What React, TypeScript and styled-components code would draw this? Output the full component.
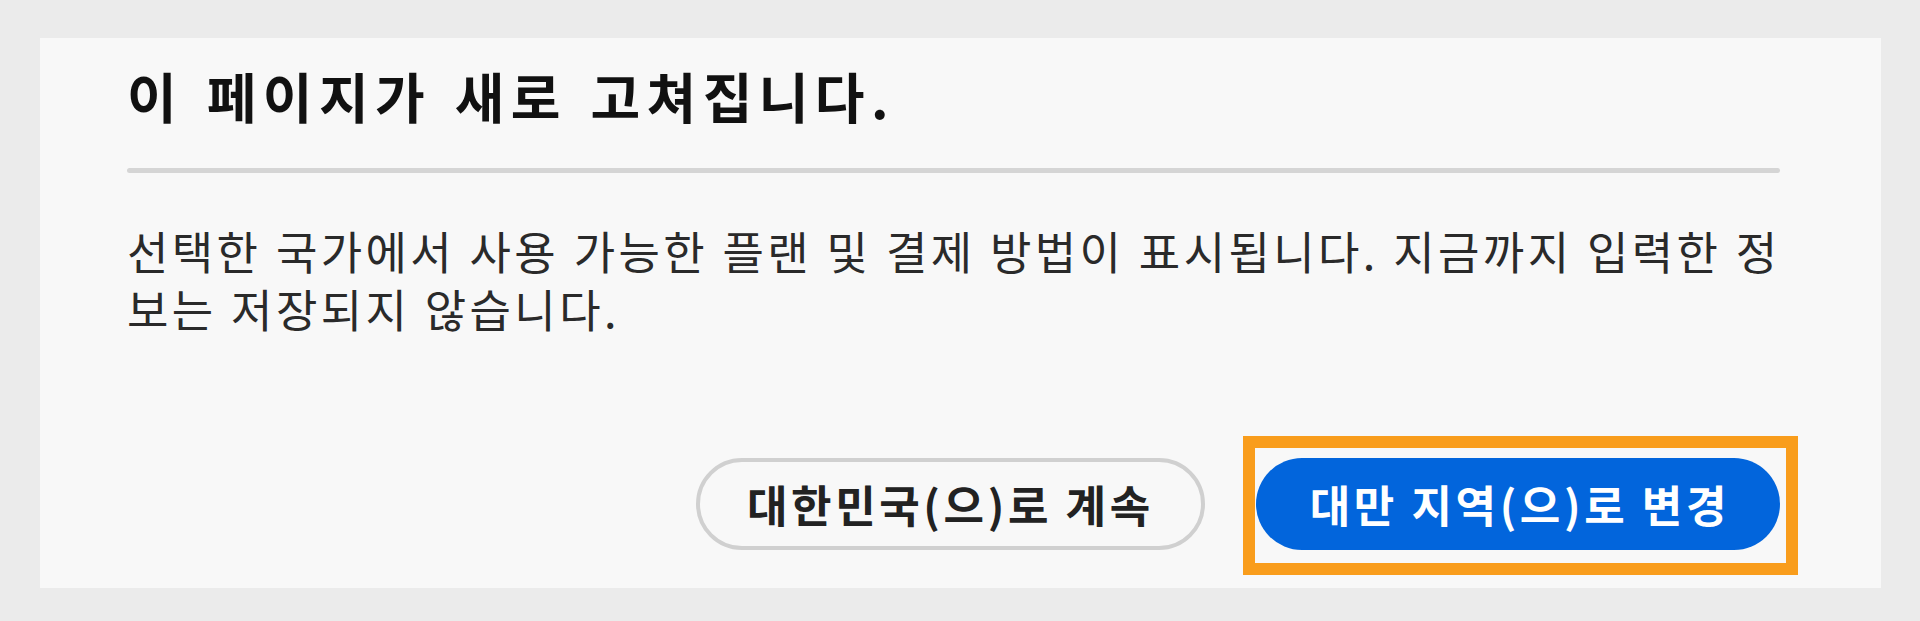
import React from 'react';
import styled, { createGlobalStyle } from 'styled-components';

const GlobalStyle = createGlobalStyle`
  html, body {
    margin: 0;
    padding: 0;
    background: #ebebeb;
  }
  body {
    font-family: "Noto Sans CJK KR", "Noto Sans", sans-serif;
  }
`;

const Page = styled.div`
  padding: 38px 39px 32px 40px;
`;

const Card = styled.section`
  background: #f8f8f8;
  padding: 23px 101px 38px 87px;
  display: flex;
  flex-direction: column;
`;

const Title = styled.h2`
  margin: 0;
  font-size: 54px;
  line-height: 70px;
  font-weight: 700;
  color: #111;
  letter-spacing: 6.4px;
  word-spacing: 5px;
`;

const Divider = styled.hr`
  margin: 37px 0 0;
  border: none;
  height: 5px;
  border-radius: 3px;
  background: #d5d5d5;
`;

const Message = styled.p`
  margin: 49px -16px 0 0;
  font-size: 45px;
  line-height: 58px;
  font-weight: 400;
  color: #2a2a2a;
  letter-spacing: 3.4px;
  word-spacing: 1px;
`;

const Actions = styled.div`
  margin-top: 120px;
  display: flex;
  justify-content: flex-end;
  gap: 51px;
`;

const Button = styled.button<{ $primary?: boolean }>`
  position: relative;
  height: 92px;
  padding: ${(p) => (p.$primary ? '0 50px 0 54px' : '0 47px')};
  border-radius: 46px;
  border: ${(p) => (p.$primary ? 'none' : '4px solid #d0d0d0')};
  background: ${(p) => (p.$primary ? '#0265dc' : '#f8f8f8')};
  color: ${(p) => (p.$primary ? '#fff' : '#222')};
  font-family: "Noto Sans CJK KR", "Noto Sans", sans-serif;
  font-size: 44px;
  font-weight: 700;
  letter-spacing: 3.6px;
  white-space: nowrap;
  cursor: pointer;
`;

// orange focus highlight drawn over the primary action
const Highlight = styled.span`
  position: absolute;
  top: -22px;
  left: -13px;
  right: -18px;
  bottom: -25px;
  border: 12px solid #f99d1c;
  pointer-events: none;
`;

const App: React.FC = () => {
  return (
    <>
      <GlobalStyle />
      <Page>
        <Card>
          <Title>이 페이지가 새로 고쳐집니다.</Title>
          <Divider />
          <Message>
            선택한 국가에서 사용 가능한 플랜 및 결제 방법이 표시됩니다. 지금까지 입력한 정보는 저장되지 않습니다.
          </Message>
          <Actions>
            <Button>대한민국(으)로 계속</Button>
            <Button $primary>
              대만 지역(으)로 변경
              <Highlight />
            </Button>
          </Actions>
        </Card>
      </Page>
    </>
  );
};

export default App;
